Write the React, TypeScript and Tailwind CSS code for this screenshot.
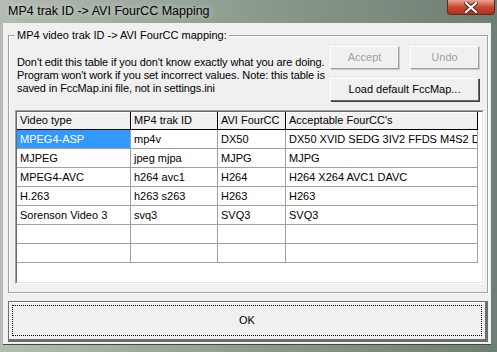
import React from "react";

const rows: [string, string, string, string][] = [
  ["MPEG4-ASP", "mp4v", "DX50", "DX50 XVID SEDG 3IV2 FFDS M4S2 DIVX"],
  ["MJPEG", "jpeg mjpa", "MJPG", "MJPG"],
  ["MPEG4-AVC", "h264 avc1", "H264", "H264 X264 AVC1 DAVC"],
  ["H.263", "h263 s263", "H263", "H263"],
  ["Sorenson Video 3", "svq3", "SVQ3", "SVQ3"],
  ["", "", "", ""],
  ["", "", "", ""],
];

const widths = ["w-[114px]", "w-[87px]", "w-[68px]", "w-[192px]"];
const headers = ["Video type", "MP4 trak ID", "AVI FourCC", "Acceptable FourCC's"];

export default function App() {
  return (
    <div
      className="w-[497px] h-[352px] overflow-hidden flex flex-col bg-gradient-to-r from-[#b3bcb3] via-[#8d9b8f] to-[#6f7e72]"
      style={{ fontFamily: '"Liberation Sans", Arial, sans-serif' }}
    >
      {/* title bar */}
      <div className="h-[23px] flex items-start shrink-0">
        <div
          className="pl-[8px] pt-[3px] text-[12.5px] leading-[17px] text-black"
          style={{ textShadow: "0 0 6px rgba(255,255,255,0.7)" }}
        >
          MP4 trak ID -&gt; AVI FourCC Mapping
        </div>
        <div className="ml-auto mr-[2px] w-[48px] h-[15px] rounded-b-[4px] border border-t-0 border-[#5b2a22] bg-gradient-to-b from-[#e8a48f] via-[#c9462f] to-[#b5301c] flex items-center justify-center">
          <svg width="14" height="11" viewBox="0 0 14 11">
            <path d="M2 1 L12 10 M12 1 L2 10" stroke="#3a2a2a" strokeWidth="4" strokeLinecap="square" />
            <path d="M2 1 L12 10 M12 1 L2 10" stroke="#ffffff" strokeWidth="2.2" strokeLinecap="square" />
          </svg>
        </div>
      </div>

      {/* client */}
      <div className="ml-[3px] w-[488px] h-[322px] bg-[#f0f0f0] flex flex-col border-b border-[#3f4a42]">
        {/* group box */}
        <div className="relative ml-[5px] mt-[12px] w-[480px] h-[258px] border border-[#a0a0a0] shadow-[inset_1px_1px_0_#ffffff,1px_1px_0_#ffffff] flex flex-col px-[8px] pt-[10px]">
          <span className="absolute -top-[9px] left-[6px] px-[2px] bg-[#f0f0f0] text-[11px] leading-[16px] text-black">
            MP4 video trak ID -&gt; AVI FourCC mapping:
          </span>

          <div className="flex items-start">
            <div className="mt-[10px] text-[11px] leading-[13px] text-black tracking-[-0.1px]">
              <div>Don't edit this table if you don't know exactly what you are doing.</div>
              <div>Program won't work if you set incorrect values. Note: this table is</div>
              <div>saved in FccMap.ini file, not in settings.ini</div>
            </div>
            <div className="ml-auto w-[149px] shrink-0 flex flex-col gap-[9px]">
              <div className="flex justify-between">
                <div className="w-[69px] h-[23px] flex items-center justify-center text-[11px] text-[#a0a0a0] border border-t-white border-l-white border-r-[#a0a0a0] border-b-[#a0a0a0] shadow-[1px_1px_0_#c8c8c8]">
                  Accept
                </div>
                <div className="w-[69px] h-[23px] flex items-center justify-center text-[11px] text-[#a0a0a0] border border-t-white border-l-white border-r-[#a0a0a0] border-b-[#a0a0a0] shadow-[1px_1px_0_#c8c8c8]">
                  Undo
                </div>
              </div>
              <div className="w-[149px] h-[23px] flex items-center justify-center text-[11px] text-black border border-t-white border-l-white border-r-[#696969] border-b-[#696969] shadow-[1px_1px_0_#404040]">
                Load default FccMap...
              </div>
            </div>
          </div>

          {/* table */}
          <div className="mt-[9px] -ml-[2px] w-[469px] h-[174px] border border-t-[#a0a0a0] border-l-[#a0a0a0] border-r-white border-b-white">
            <div className="w-full h-full border border-t-[#696969] border-l-[#696969] border-r-[#e3e3e3] border-b-[#e3e3e3] bg-white overflow-hidden text-[11px] text-black">
              <div className="flex h-[18px]">
                {headers.map((h, i) => (
                  <div
                    key={h}
                    className={`${widths[i]} shrink-0 h-[18px] bg-[#f0f0f0] border-r border-b border-r-[#000] border-b-[#000] shadow-[inset_1px_1px_0_#ffffff] pl-[3px] flex items-center whitespace-nowrap overflow-hidden`}
                  >
                    {h}
                  </div>
                ))}
              </div>
              {rows.map((r, ri) => (
                <div key={ri} className="flex h-[19px]">
                  {r.map((c, ci) => (
                    <div
                      key={ci}
                      className={`${widths[ci]} shrink-0 h-[19px] border-r border-b border-[#a0a0a0] pl-[3px] flex items-center whitespace-nowrap overflow-hidden ${
                        ri === 0 && ci === 0 ? "bg-[#3399ff] text-white" : ""
                      }`}
                    >
                      {c}
                    </div>
                  ))}
                </div>
              ))}
            </div>
          </div>
        </div>

        {/* OK button */}
        <div className="ml-[5px] mt-[8px] w-[480px] h-[41px] border border-[#6d6d6d] border-r-[3px] border-b-[3px] shadow-[inset_1px_1px_0_#ffffff] p-[3px] flex">
          <div className="flex-1 border border-dotted border-black flex items-center justify-center text-[11px] text-black">
            OK
          </div>
        </div>
      </div>
    </div>
  );
}
